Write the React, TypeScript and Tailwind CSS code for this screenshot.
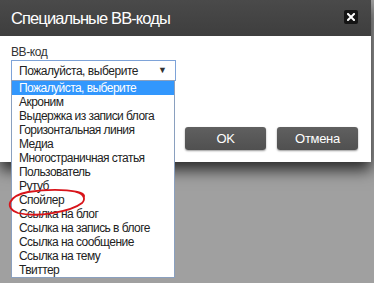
import React from 'react';

const options = [
  'Пожалуйста, выберите',
  'Акроним',
  'Выдержка из записи блога',
  'Горизонтальная линия',
  'Медиа',
  'Многостраничная статья',
  'Пользователь',
  'Рутуб',
  'Спойлер',
  'Ссылка на блог',
  'Ссылка на запись в блоге',
  'Ссылка на сообщение',
  'Ссылка на тему',
  'Твиттер',
];

export default function App() {
  return (
    <div className="relative w-[374px] h-[283px] overflow-hidden bg-[#a0a0a0] font-['Liberation_Sans',Arial,sans-serif]">
      <div className="w-[371px] shadow-[0_8px_14px_rgba(0,0,0,0.75)]">
        <div className="h-[36px] flex items-center justify-between pl-[11px] pr-[13px] bg-gradient-to-b from-[#4a4a4a] to-[#3e3e3e]">
          <span className="text-[16.5px] tracking-[-0.9px] text-white leading-none">Специальные BB-коды</span>
          <button className="w-[14px] h-[14px] mt-[-2px] rounded-[2px] bg-[#151515] flex items-center justify-center">
            <svg width="8" height="8" viewBox="0 0 8 8">
              <path d="M1 1 L7 7 M7 1 L1 7" stroke="white" strokeWidth="2" strokeLinecap="square" />
            </svg>
          </button>
        </div>
        <div className="h-[126px] bg-white flex flex-col px-[11px] pt-[9px]">
          <label className="text-[12px] leading-[14px] tracking-[-0.4px] text-[#333]">BB-код</label>
          <div className="mt-[1px] w-[165px] h-[21px] border border-[#7ea3d8] bg-white flex items-center justify-between pl-[7px] pr-[8px]">
            <span className="text-[12px] tracking-[-0.45px] text-[#222] whitespace-nowrap">Пожалуйста, выберите</span>
            <span className="text-[9px] text-[#333]">▼</span>
          </div>
          <div className="mt-[46px] self-end flex gap-[11px] pr-[2px]">
            <button className="w-[81px] h-[23px] rounded-[3px] bg-gradient-to-b from-[#606060] to-[#505050] text-white text-[13px] tracking-[-0.3px] shadow-[0_1px_2px_rgba(0,0,0,0.4)]">
              OK
            </button>
            <button className="w-[81px] h-[23px] rounded-[3px] bg-gradient-to-b from-[#606060] to-[#505050] text-white text-[13px] tracking-[-0.3px] shadow-[0_1px_2px_rgba(0,0,0,0.4)]">
              Отмена
            </button>
          </div>
        </div>
      </div>

      <ul className="absolute left-[11px] top-[80px] w-[164px] border border-[#8aa0bf] bg-white">
        {options.map((o, i) => (
          <li
            key={o}
            className={
              i === 0
                ? 'h-[14px] leading-[14px] pl-[7px] text-[12px] tracking-[-0.55px] whitespace-nowrap bg-[#3297fd] text-white'
                : 'h-[14px] leading-[14px] pl-[7px] text-[12px] tracking-[-0.55px] whitespace-nowrap text-[#222]'
            }
          >
            {o}
          </li>
        ))}
      </ul>

      <svg className="absolute left-0 top-0 pointer-events-none" width="374" height="283">
        <path
          d="M84 197 C86 190 55 188 28 192 C8 196 4 208 18 213 C38 218 72 211 82 203 C86 199 84 194 76 192"
          fill="none"
          stroke="#d8141a"
          strokeWidth="1.8"
          strokeLinecap="round"
        />
      </svg>
    </div>
  );
}
